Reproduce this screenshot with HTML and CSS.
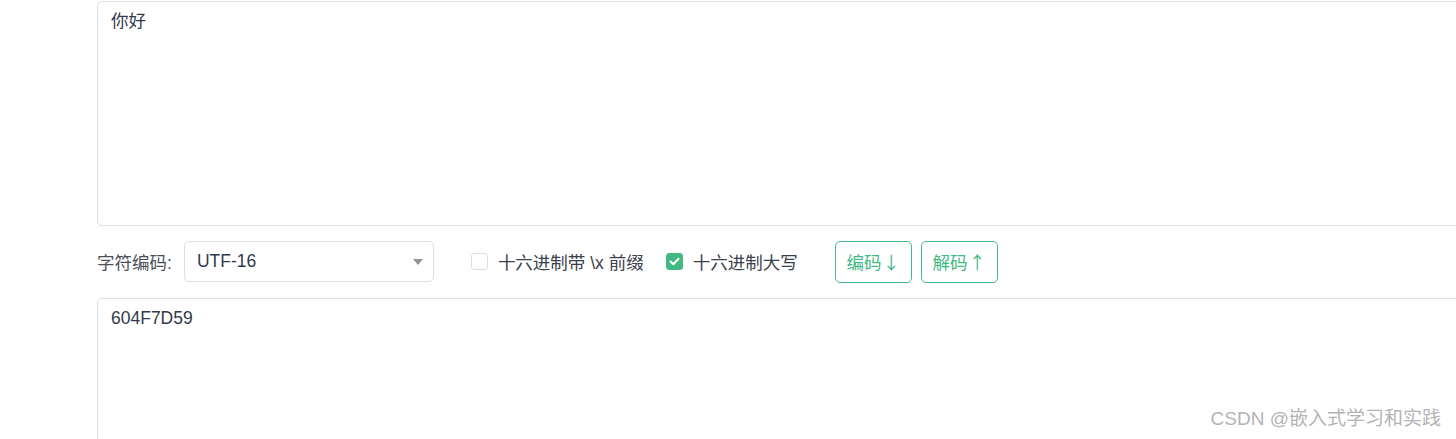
FILE: index.html
```html
<!DOCTYPE html>
<html>
<head>
  <title>字符编码转换</title>
  <link rel="stylesheet" href="styles.css">
</head>
<body>
  <div class="page">
    <textarea class="text-box top-box" readonly>你好</textarea>

    <div class="toolbar">
      <label class="field-label">字符编码:</label>
      <div class="select">
        <span>UTF-16</span>
        <span class="caret"></span>
      </div>

      <label class="check">
        <span class="box"></span>
        <span>十六进制带 \x 前缀</span>
      </label>
      <label class="check checked">
        <span class="box">
          <svg width="11" height="9" viewBox="0 0 11 9"><path d="M1.5 4.5 L4.3 7.2 L9.5 1.8" fill="none" stroke="#fff" stroke-width="2" stroke-linecap="round" stroke-linejoin="round"/></svg>
        </span>
        <span>十六进制大写</span>
      </label>

      <div class="buttons">
        <button class="btn">编码<span class="arrow">↓</span></button>
        <button class="btn">解码<span class="arrow">↑</span></button>
      </div>
    </div>

    <textarea class="text-box bottom-box" readonly>604F7D59</textarea>
  </div>

  <div class="watermark">CSDN @嵌入式学习和实践</div>
</body>
</html>
```

FILE: styles.css
```css
html, body {
  margin: 0;
  height: 100%;
  overflow: hidden;
  background: #fff;
}
body {
  font-family: "Liberation Sans", "Noto Sans CJK SC", sans-serif;
  font-size: 17.5px;
  color: #606266;
}
.page {
  width: 1420px;
  padding: 1px 0 0 97px;
}
.text-box {
  display: block;
  box-sizing: border-box;
  width: 100%;
  padding: 6px 13px;
  border: 1px solid #dcdfe6;
  border-radius: 5px;
  font-family: inherit;
  font-size: 17.5px;
  line-height: 1.5;
  color: #303a4a;
  resize: none;
  outline: none;
}
.top-box {
  height: 225px;
}
.bottom-box {
  height: 150px;
  margin-top: 16px;
}
.toolbar {
  display: flex;
  align-items: center;
  height: 41px;
  margin-top: 15px;
}
.field-label {
  margin-right: 12px;
  color: #4a4f5a;
}
.select {
  box-sizing: border-box;
  width: 250px;
  height: 41px;
  display: flex;
  align-items: center;
  justify-content: space-between;
  padding: 0 10px 0 12px;
  border: 1px solid #dcdfe6;
  border-radius: 5px;
  color: #303a4a;
}
.caret {
  width: 0;
  height: 0;
  border-left: 5px solid transparent;
  border-right: 5px solid transparent;
  border-top: 6px solid #909399;
}
.check {
  display: flex;
  align-items: center;
  gap: 10px;
  margin-left: 37px;
  color: #3a404c;
}
.check + .check {
  margin-left: 22px;
}
.box {
  box-sizing: border-box;
  width: 17px;
  height: 17px;
  border: 1px solid #dcdfe6;
  border-radius: 3px;
  display: flex;
  align-items: center;
  justify-content: center;
}
.checked .box {
  background: #42b983;
  border-color: #42b983;
}
.buttons {
  display: flex;
  gap: 9px;
  margin-left: 37px;
}
.btn {
  box-sizing: border-box;
  width: 77px;
  height: 42px;
  padding: 0;
  border: 1px solid #42b983;
  border-radius: 5px;
  background: #fff;
  color: #42b983;
  font-family: inherit;
  font-size: 17.5px;
  cursor: pointer;
}
.arrow {
  font-family: "Noto Sans CJK SC", sans-serif;
  margin-left: 1px;
}
.watermark {
  position: absolute;
  right: 15px;
  bottom: 9px;
  font-size: 19px;
  color: #b4b4b4;
}
```
